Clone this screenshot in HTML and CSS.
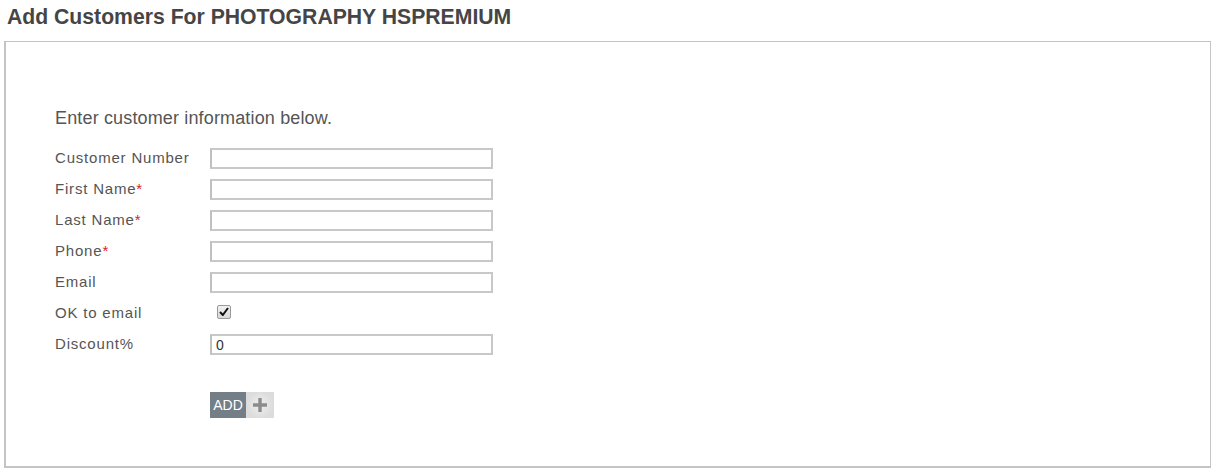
FILE: index.html
```html
<!DOCTYPE html>
<html>
<head>
<meta charset="utf-8">
<link rel="stylesheet" href="styles.css">
</head>
<body>
<h1 class="title">Add Customers For PHOTOGRAPHY HSPREMIUM</h1>
<div class="panel">
  <p class="intro">Enter customer information below.</p>
  <div class="form">
    <div class="row"><label class="label">Customer Number</label><input class="field" type="text"></div>
    <div class="row"><label class="label">First Name<span class="req">*</span></label><input class="field" type="text"></div>
    <div class="row"><label class="label">Last Name<span class="req">*</span></label><input class="field" type="text"></div>
    <div class="row"><label class="label">Phone<span class="req">*</span></label><input class="field" type="text"></div>
    <div class="row"><label class="label">Email</label><input class="field" type="text"></div>
    <div class="row"><label class="label">OK to email</label>
      <span class="check"><svg width="10" height="9" viewBox="0 0 10 9"><path d="M1 5 L3.8 8 L9 1" fill="none" stroke="#111" stroke-width="2"/></svg></span>
    </div>
    <div class="row"><label class="label">Discount%</label><input class="field" type="text" value="0"></div>
  </div>
  <div class="actions">
    <button class="add-btn"><span class="add-text">ADD</span><span class="add-icon"><svg width="18" height="18" viewBox="0 0 18 18"><path d="M9 2 V16 M2 9 H16" stroke="#8c8c8c" stroke-width="3.4"/></svg></span></button>
  </div>
</div>
</body>
</html>
```
FILE: styles.css
```css
html, body {
  margin: 0;
  padding: 0;
  background: #fff;
}
body {
  font-family: "Liberation Sans", Arial, sans-serif;
  padding: 0 4px;
}
.title {
  margin: 0;
  padding: 5px 0 0 3px;
  height: 41px;
  box-sizing: border-box;
  font-size: 21.2px;
  font-weight: bold;
  color: #454545;
  line-height: 24px;
}
.panel {
  border: 2px solid #c4c4c4;
  border-top-width: 1px;
  border-right-width: 1px;
  height: 427px;
  box-sizing: border-box;
  padding: 65px 0 0 49px;
}
.intro {
  margin: 0 0 19px 0;
  font-size: 18px;
  letter-spacing: 0.15px;
  color: #555;
  line-height: 22px;
}
.form {
  display: flex;
  flex-direction: column;
  gap: 10px;
}
.row {
  display: flex;
  align-items: center;
  height: 21px;
}
.label {
  width: 155px;
  font-size: 15px;
  letter-spacing: 0.8px;
  color: #555;
  line-height: 18px;
  margin-top: -2px;
}
.req {
  color: #e02020;
  letter-spacing: 0;
}
.field {
  width: 283px;
  height: 21px;
  box-sizing: border-box;
  border: 2px solid #c8c8c8;
  border-left-color: #c0c0c0;
  padding: 0 4px;
  margin: 0;
  font-family: "Liberation Sans", Arial, sans-serif;
  font-size: 14px;
  color: #333;
  outline: none;
}
.check {
  margin-left: 7px;
  margin-top: -4px;
  width: 12px;
  height: 12px;
  border: 1px solid #9a9a9a;
  border-radius: 2px;
  background: linear-gradient(#f2f2f2, #d8d8d8);
  display: flex;
  align-items: center;
  justify-content: center;
}
.actions {
  padding: 37px 0 0 155px;
}
.add-btn {
  display: flex;
  border: 0;
  padding: 0;
  margin: 0;
  height: 26px;
  background: none;
  cursor: pointer;
}
.add-text {
  width: 36px;
  height: 26px;
  background: #747e87;
  color: #fff;
  font-family: "Liberation Sans", Arial, sans-serif;
  font-size: 14px;
  line-height: 26px;
  text-align: center;
}
.add-icon {
  width: 28px;
  height: 26px;
  background: radial-gradient(circle, #f0f0f0 0%, #dcdcdc 70%);
  display: flex;
  align-items: center;
  justify-content: center;
}
```
